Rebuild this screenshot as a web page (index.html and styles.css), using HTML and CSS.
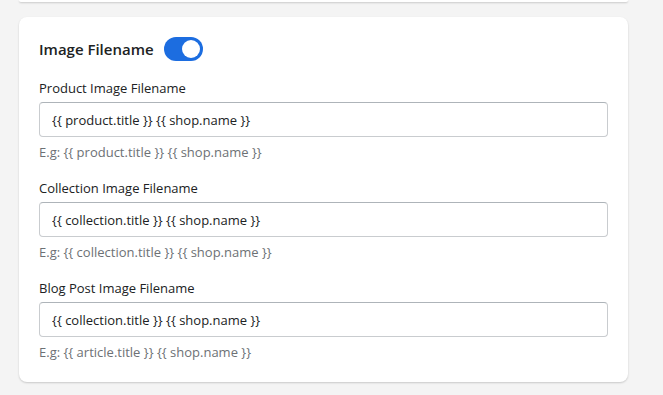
FILE: index.html
```html
<!DOCTYPE html>
<html lang="en">
<head>
    <meta charset="UTF-8">
    <meta name="viewport" content="width=device-width, initial-scale=1.0">
    <title>Image Filename</title>
    <link rel="stylesheet" href="styles.css">
</head>
<body>
    <div class="page">
        <div class="card card-prev"></div>

        <div class="card">
            <div class="card-header">
                <h2>Image Filename</h2>
                <span class="switch"><span class="knob"></span></span>
            </div>

            <div class="field">
                <label for="product">Product Image Filename</label>
                <input id="product" type="text" value="{{ product.title }} {{ shop.name }}">
                <p class="help">E.g: {{ product.title }} {{ shop.name }}</p>
            </div>

            <div class="field">
                <label for="collection">Collection Image Filename</label>
                <input id="collection" type="text" value="{{ collection.title }} {{ shop.name }}">
                <p class="help">E.g: {{ collection.title }} {{ shop.name }}</p>
            </div>

            <div class="field">
                <label for="blog">Blog Post Image Filename</label>
                <input id="blog" type="text" value="{{ collection.title }} {{ shop.name }}">
                <p class="help">E.g: {{ article.title }} {{ shop.name }}</p>
            </div>
        </div>
    </div>
</body>
</html>
```

FILE: styles.css
```css
body {
    margin: 0;
    background-color: #f4f4f4;
    font-family: "Open Sans", "Noto Sans", Arial, sans-serif;
    color: #202223;
}
.page {
    padding: 0 35px 20px 19px;
}
.card {
    background-color: #fff;
    border-radius: 8px;
    box-shadow: 0 1px 2px rgba(0, 0, 0, 0.18);
    padding: 20px;
}
.card-prev {
    height: 2px;
    padding: 0;
    border-radius: 0 0 8px 8px;
    margin-bottom: 15px;
}
.card-header {
    display: flex;
    align-items: center;
    gap: 10px;
    height: 24px;
    margin-bottom: 17px;
}
h2 {
    margin: 0;
    font-size: 15px;
    font-weight: 600;
    color: #202223;
}
.switch {
    position: relative;
    display: inline-block;
    width: 39px;
    height: 24px;
    border-radius: 12px;
    background-color: #1c6de0;
}
.knob {
    position: absolute;
    top: 3px;
    right: 3px;
    width: 18px;
    height: 18px;
    border-radius: 50%;
    background-color: #fff;
}
.field {
    margin-bottom: 16px;
}
.field:last-child {
    margin-bottom: 0;
}
label {
    display: block;
    font-size: 13px;
    line-height: 20px;
    margin-bottom: 4px;
}
input {
    display: block;
    box-sizing: border-box;
    width: 100%;
    height: 35px;
    padding: 0 12px;
    border: 1px solid #c9cccf;
    border-top-color: #aeb4b9;
    border-radius: 4px;
    font-family: inherit;
    font-size: 13px;
    color: #202223;
    background-color: #fff;
}
.help {
    margin: 5px 0 0;
    font-size: 13px;
    line-height: 20px;
    color: #6d7175;
}
```
